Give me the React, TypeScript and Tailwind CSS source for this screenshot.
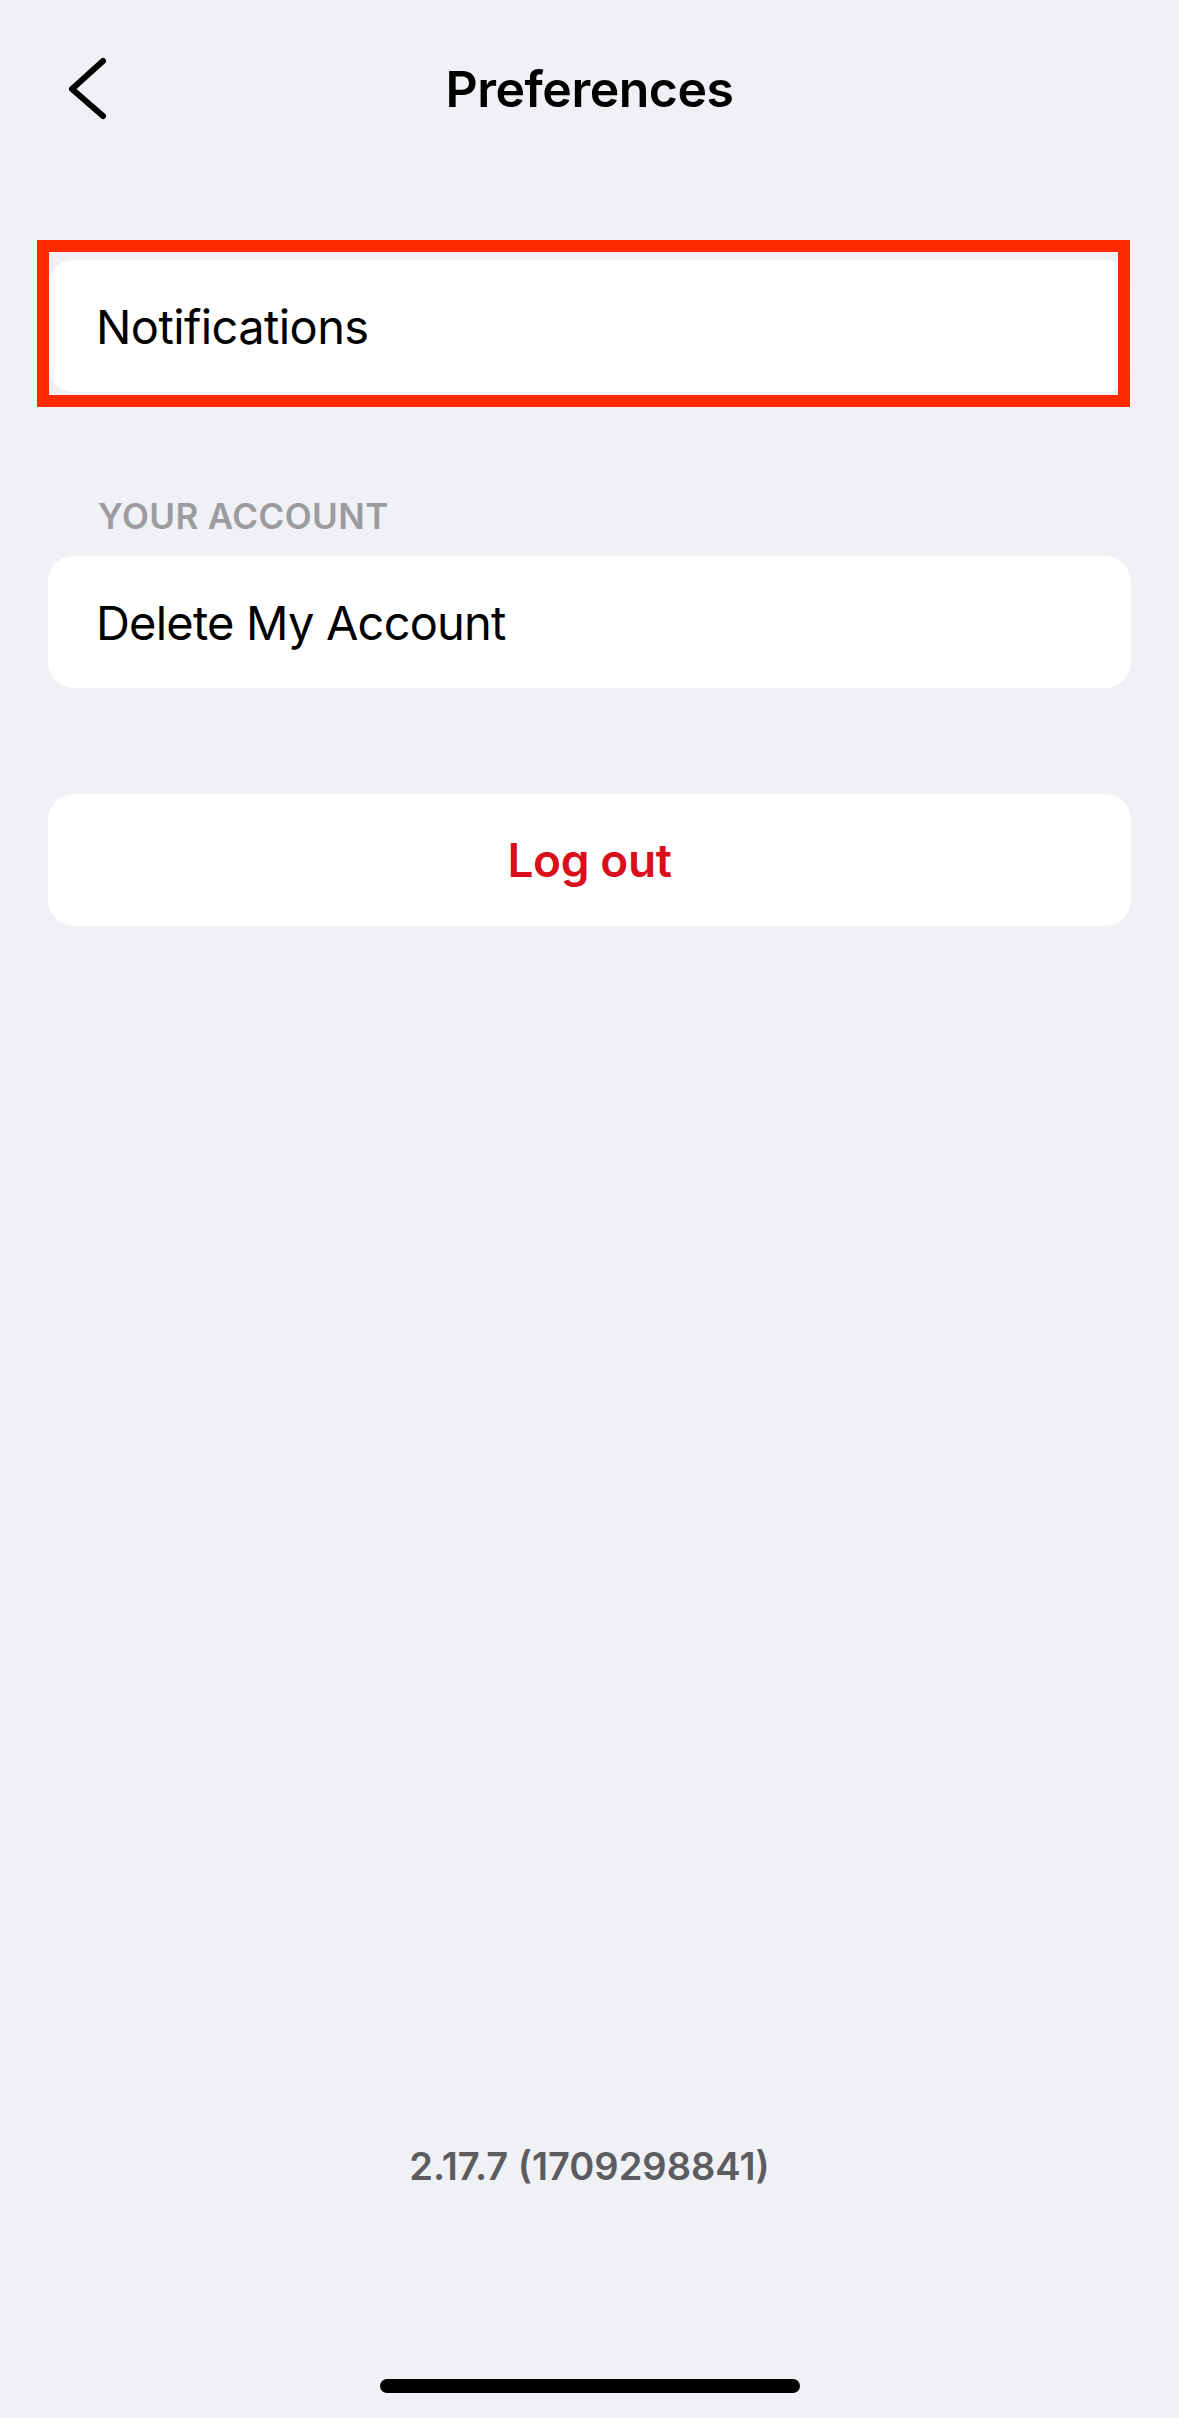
export default function App() {
  return (
    <div
      className="flex min-h-screen w-full flex-col bg-[#f0f1f5] text-black"
      style={{ fontFamily: 'Inter, "Noto Sans", sans-serif' }}
    >
      {/* nav bar */}
      <header className="grid h-[178px] grid-cols-[1fr_auto_1fr] items-center">
        <div className="pl-[68px]">
          <svg width="40" height="64" viewBox="0 0 40 64" fill="none">
            <path
              d="M35 4 L4 32 L35 59"
              stroke="#000"
              strokeWidth="6"
              strokeLinecap="round"
              strokeLinejoin="round"
            />
          </svg>
        </div>
        <h1 className="text-[50px] font-semibold leading-none tracking-[-0.5px]">Preferences</h1>
        <div />
      </header>

      <main className="flex flex-col px-[48px] pt-[82px]">
        <div className="relative">
          <button className="flex h-[132px] w-full items-center rounded-[26px] bg-white px-[48px] text-left text-[47px] leading-none tracking-[-0.6px]">
            Notifications
          </button>
          {/* highlight */}
          <div className="pointer-events-none absolute -top-[20px] -bottom-[15px] -left-[11px] right-[1px] border-[12px] border-[#ff2a00]" />
        </div>

        <p className="mt-[107px] mb-[22px] pl-[50px] text-[35px] font-semibold leading-none tracking-[0.4px] text-[#9b9ba0]">
          YOUR ACCOUNT
        </p>

        <button className="flex h-[132px] w-full items-center rounded-[26px] bg-white px-[48px] text-left text-[47px] leading-none tracking-[-0.8px]">
          Delete My Account
        </button>

        <button className="mt-[106px] flex h-[132px] w-full items-center justify-center rounded-[26px] bg-white text-[46px] font-semibold leading-none tracking-[-0.4px] text-[#d9101c]">
          Log out
        </button>
      </main>

      <footer className="mt-auto flex flex-col items-center">
        <p className="text-[38px] font-semibold leading-none text-[#5c5c61]">2.17.7 (1709298841)</p>
        <div className="mt-[194px] mb-[25px] h-[14px] w-[420px] rounded-full bg-black" />
      </footer>
    </div>
  );
}
